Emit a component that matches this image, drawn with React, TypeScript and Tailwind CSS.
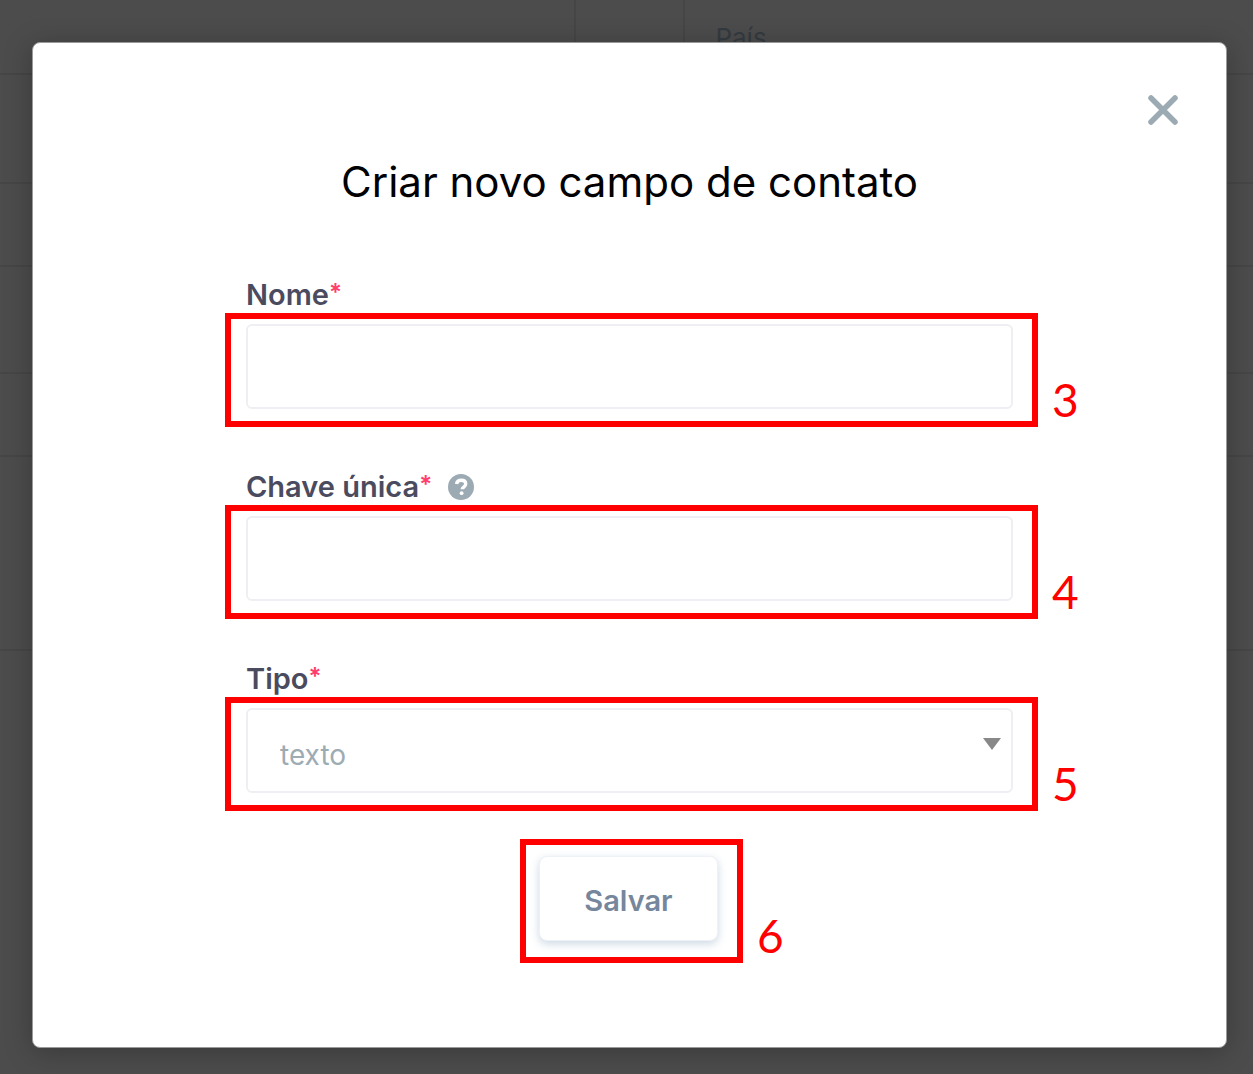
import type { ReactNode } from "react";

function Marker({ number }: { number: number }) {
  return (
    <span className="absolute -bottom-1 left-full ml-5 font-['Lato'] text-[46px] leading-[50px] text-[#ff0000]">
      {number}
    </span>
  );
}

function Label({ htmlFor, children }: { htmlFor: string; children: ReactNode }) {
  return (
    <label htmlFor={htmlFor} className="flex text-[29px] leading-9 font-semibold text-[#4b4b60]">
      {children}
      <span className="text-[24px] leading-8 text-[#ff3e6c]">*</span>
    </label>
  );
}

function Field({
  id,
  label,
  number,
  help,
  children,
}: {
  id: string;
  label: string;
  number: number;
  help?: ReactNode;
  children: ReactNode;
}) {
  return (
    <div>
      <div className="flex h-9 items-center gap-4 pl-[21px]">
        <Label htmlFor={id}>{label}</Label>
        {help}
      </div>
      <div className="relative border-6 border-[#ff0000] pt-[5px] pr-[19px] pb-3 pl-[15px]">
        {children}
        <Marker number={number} />
      </div>
    </div>
  );
}

const control =
  "block h-[85px] w-full rounded-md border-2 border-[#eeeff2] bg-white px-8 text-[28px] text-[#9dabb3] outline-none";

function HelpIcon() {
  return (
    <svg viewBox="0 0 26 26" className="size-[26px]" fill="none" aria-hidden="true">
      <circle cx="13" cy="13" r="13" fill="#9caab3" />
      <path
        d="M8.5 10C9 7.6 10.8 6.3 13.2 6.3c2.7 0 4.5 1.4 4.5 3.7 0 3-3.5 3-3.5 5.3"
        stroke="#fff"
        strokeWidth="3.4"
      />
      <circle cx="13.6" cy="19.2" r="1.9" fill="#fff" />
    </svg>
  );
}

function Backdrop() {
  const line = "border-b-2 border-[#464646]";
  return (
    <div className="col-start-1 row-start-1 flex flex-col bg-[#4c4c4c] text-[26px] text-[#343b40]">
      <div className={`flex h-[75px] ${line}`}>
        <div className="w-[46%] border-r-2 border-[#464646]" />
        <div className="w-[109px] border-r-2 border-[#464646]" />
        <div className="pt-5 pl-[30px] leading-9">País</div>
      </div>
      <div className={`h-[109px] ${line}`} />
      <div className={`h-[83px] ${line}`} />
      <div className={`h-[107px] ${line}`} />
      <div className={`h-[83px] ${line}`} />
      <div className={`h-[194px] ${line}`} />
    </div>
  );
}

export default function App() {
  return (
    <div className="grid min-h-screen font-['Inter',sans-serif]">
      <Backdrop />
      <div
        role="dialog"
        aria-modal="true"
        aria-labelledby="title"
        className="z-10 col-start-1 row-start-1 mt-[42px] mr-[26px] mb-[26px] ml-8 flex flex-col rounded-lg border border-[#9a9a9a] bg-white shadow-[0_4px_28px_rgba(0,0,0,0.25)]"
      >
        <div className="flex justify-end pt-[51px] pr-[47px]">
          <button type="button" aria-label="Fechar" className="size-8">
            <svg viewBox="0 0 32 32" className="size-8" aria-hidden="true">
              <path d="M4 4 28 28M28 4 4 28" stroke="#9caab3" strokeWidth="5.5" strokeLinecap="round" />
            </svg>
          </button>
        </div>
        <h1 id="title" className="mt-[30px] text-center text-[42px] leading-[52px] text-black">
          Criar novo campo de contato
        </h1>
        <form className="mt-[69px] ml-1 flex w-[813px] flex-col gap-[42px] self-center">
          <Field id="nome" label="Nome" number={3}>
            <input id="nome" type="text" className={control} />
          </Field>
          <Field
            id="chave"
            label="Chave única"
            number={4}
            help={
              <button type="button" aria-label="Ajuda">
                <HelpIcon />
              </button>
            }
          >
            <input id="chave" type="text" className={control} />
          </Field>
          <Field id="tipo" label="Tipo" number={5}>
            <div className="relative">
              <select id="tipo" className={`${control} appearance-none pt-2`}>
                <option>texto</option>
              </select>
              <svg
                viewBox="0 0 18 12"
                className="pointer-events-none absolute top-[30px] right-3 h-3 w-[18px]"
                aria-hidden="true"
              >
                <path d="M0 0h18L9 12z" fill="#888" />
              </svg>
            </div>
          </Field>
          <div className="relative -mt-[14px] self-center border-6 border-[#ff0000] pt-[11px] pr-[19px] pb-4 pl-[13px]">
            <button
              type="button"
              className="block h-[85px] w-[179px] rounded-lg border border-[#eef1f5] bg-white pt-1 text-[29px] font-semibold text-[#75869d] shadow-[0_3px_8px_rgba(90,130,170,0.3)]"
            >
              Salvar
            </button>
            <Marker number={6} />
          </div>
        </form>
      </div>
    </div>
  );
}
